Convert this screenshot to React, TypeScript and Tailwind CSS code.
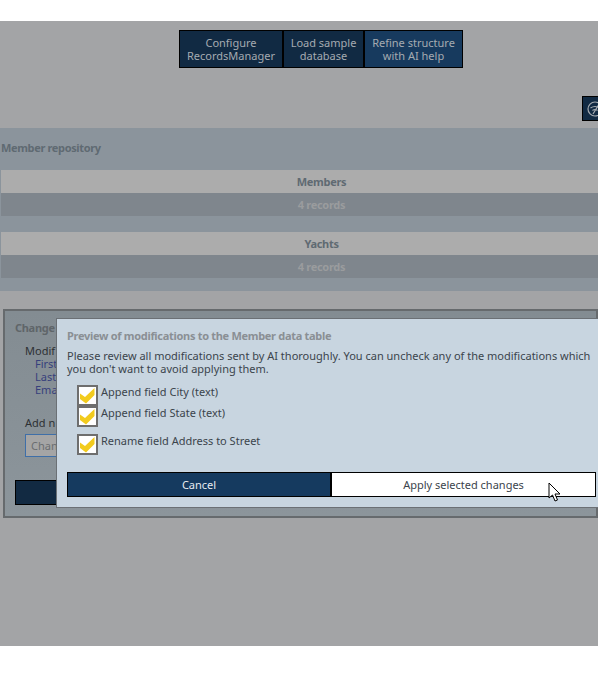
const uiFont = "font-['Noto_Sans','Open_Sans',sans-serif]"

function Check() {
  return (
    <span className="flex w-[21px] h-[21px] shrink-0 items-center justify-center border-2 border-[#6e6e6e] bg-white">
      <svg className="w-[17px] h-[17px]" viewBox="0 0 17 17" fill="none">
        <path d="M1 6.5l5 3.5L15.5 1v7L7 16.5 1 12z" fill="#f2cb1d" />
      </svg>
    </span>
  )
}

function RecordCard({ title, className }: { title: string; className?: string }) {
  return (
    <div className={`ml-px w-[641px] font-bold text-[11px] tracking-[-0.3px] text-center ${className ?? ''}`}>
      <div className="h-[23px] leading-[23px] bg-[#acacac] text-[#5f6a72]">{title}</div>
      <div className="h-[23px] leading-[23px] bg-[#7f868d] text-[#9a9c9e]">4 records</div>
    </div>
  )
}

export default function App() {
  return (
    <div className={`relative w-[598px] h-[673px] overflow-hidden bg-white pt-[21px] ${uiFont} text-[11px]`}>
      <main className="h-[625px] bg-[#a3a4a6] pt-[9px]">
        {/* top toolbar */}
        <div className="ml-[179px] flex w-[284px] h-[38px] border border-black bg-black gap-[2px] leading-[13px] text-[#a5abb1] text-center text-[11px]">
          <button className="w-[102px] bg-[#112a43]">Configure<br />RecordsManager</button>
          <button className="w-[79px] bg-[#112a43]">Load sample<br />database</button>
          <button className="flex-1 bg-[#173a5e]">Refine structure<br />with AI help</button>
        </div>

        <div className="mt-[28px] ml-[582px] flex w-[30px] h-[25px] items-center border border-black bg-[#112a43] pl-[4px]">
          <svg className="w-[16px] h-[16px] text-[#a5abb1]" viewBox="0 0 16 16" fill="none" stroke="currentColor" strokeWidth="1.2">
            <circle cx="8" cy="8" r="7" />
            <path d="M3.5 7q4.5-3 9 0M5.5 9.5q2.5-2 5 0M11.5 4L6 13" />
          </svg>
        </div>

        {/* repository panel */}
        <section className="mt-[7px] h-[163px] bg-[#8b949c] pt-[13px]">
          <h2 className="h-[29px] pl-px leading-[13px] font-bold text-[11px] tracking-[-0.35px] text-[#5f6a72]">Member repository</h2>
          <RecordCard title="Members" />
          <RecordCard title="Yachts" className="mt-[16px]" />
        </section>

        {/* change panel behind the dialog */}
        <section className="mt-[18px] ml-[3px] h-[209px] border-2 border-[#666a6d] bg-gradient-to-b from-[#838c92] to-[#8c959b] pl-[10px] pt-[10px] leading-[13px]">
          <div className="font-bold tracking-[-0.3px] text-[#5f6569]">Change</div>
          <div className="mt-[10px] ml-[10px] text-[#2d3033]">Modif</div>
          <div className="ml-[20px] text-[#36407c]">First</div>
          <div className="ml-[20px] text-[#36407c]">Last</div>
          <div className="ml-[20px] text-[#36407c]">Email</div>
          <div className="mt-[20px] ml-[10px] text-[#2d3033]">Add n</div>
          <div className="mt-[5px] ml-[10px] flex w-[200px] h-[23px] items-center border border-[#3f6fa8] bg-[#a5a5a5] pl-[5px] text-[#6a6d70]">Change</div>
          <div className="mt-[23px] w-[200px] h-[25px] border border-black bg-[#122a42]" />
        </section>
      </main>

      {/* dialog */}
      <div className="absolute left-[56px] top-[318px] w-[560px] h-[190px] border border-[#6b7075] bg-[#c8d5e0] pl-[10px] pt-[10px] leading-[13px]">
        <h3 className="font-bold tracking-[-0.3px] text-[#8a8f94]">Preview of modifications to the Member data table</h3>
        <p className="mt-[7px] w-[530px] text-[#3b444c]">
          Please review all modifications sent by AI thoroughly. You can uncheck any of the modifications which you don't want to avoid applying them.
        </p>
        <div className="mt-[10px] ml-[10px] text-[#3b444c]">
          <label className="flex h-[21px] gap-[3px]"><Check /><span>Append field City (text)</span></label>
          <label className="flex h-[21px] gap-[3px]"><Check /><span>Append field State (text)</span></label>
          <label className="mt-[7px] flex h-[21px] gap-[3px]"><Check /><span>Rename field Address to Street</span></label>
        </div>
        <div className="mt-[17px] flex h-[25px] w-[529px]">
          <button className="w-[264px] border border-black bg-[#153a5f] text-[#e6ebf0]">Cancel</button>
          <button className="flex-1 border border-black bg-white text-[#3b444c]">Apply selected changes</button>
        </div>
      </div>

      {/* mouse pointer */}
      <svg className="absolute left-[548px] top-[482px] w-[13px] h-[20px]" viewBox="0 0 13 20">
        <path d="M1 1v15l3.5-3 2.5 6 2.5-1-2.5-6h5z" fill="#fff" stroke="#000" strokeWidth="1" />
      </svg>
    </div>
  )
}
